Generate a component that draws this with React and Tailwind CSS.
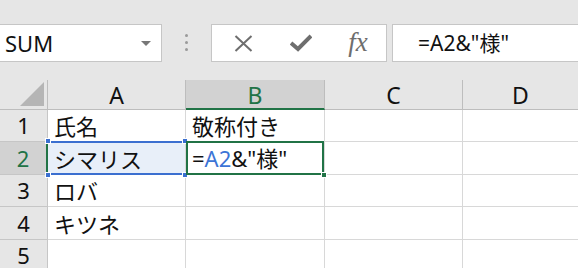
const rows = [
  { n: 1, a: '氏名', b: '敬称付き' },
  { n: 2, a: 'シマリス', b: null, active: true },
  { n: 3, a: 'ロバ', b: '' },
  { n: 4, a: 'キツネ', b: '' },
  { n: 5, a: '', b: '' },
];

const rowHeights = ['h-[32px]', 'h-[33px]', 'h-[32px]', 'h-[33px]', 'h-[32px]'];

function Handle({ className }) {
  return <span className={`absolute h-[6px] w-[6px] border border-white ${className}`} />;
}

export default function App() {
  return (
    <div className="h-[268px] w-[578px] overflow-hidden bg-white font-['Noto_Sans','Noto_Sans_CJK_JP',sans-serif] text-[#111]">
      {/* Formula bar */}
      <div className="flex h-[80px] items-start bg-[#e6e6e6] pt-[24px]">
        <div className="flex h-[38px] w-[162px] items-center justify-between border border-l-0 border-[#c6c6c6] bg-white pl-[5px] pr-[10px]">
          <span className="text-[22px] leading-none">SUM</span>
          <span className="h-0 w-0 border-x-[5px] border-t-[5px] border-x-transparent border-t-[#777]" />
        </div>
        <div className="flex w-[49px] flex-col items-center gap-[4px] pt-[10px]">
          <span className="h-[3px] w-[3px] rounded-full bg-[#9a9a9a]" />
          <span className="h-[3px] w-[3px] rounded-full bg-[#9a9a9a]" />
          <span className="h-[3px] w-[3px] rounded-full bg-[#9a9a9a]" />
        </div>
        <div className="flex h-[38px] w-[176px] items-center border border-[#c6c6c6] bg-white text-[#6e6e6e]">
          <div className="flex w-[60px] justify-center pl-[2px]">
            <svg width="19" height="17" viewBox="0 0 19 17">
              <path d="M1.5 1 L17.5 16 M17.5 1 L1.5 16" stroke="currentColor" strokeWidth="2" fill="none" />
            </svg>
          </div>
          <div className="flex w-[58px] justify-center">
            <svg width="22" height="18" viewBox="0 0 22 18">
              <path d="M1 9 L8 15 L21 2" stroke="currentColor" strokeWidth="4" fill="none" strokeLinejoin="miter" />
            </svg>
          </div>
          <div className="flex w-[56px] justify-center pb-[2px]">
            <span className="font-['Liberation_Serif',serif] text-[27px] italic leading-none">fx</span>
          </div>
        </div>
        <div className="ml-[5px] flex h-[38px] flex-1 items-center border border-r-0 border-[#c6c6c6] bg-white pl-[25px]">
          <span className="text-[21px] leading-none">=A2&amp;"様"</span>
        </div>
      </div>

      {/* Sheet */}
      <div className="grid grid-cols-[48px_138px_139px_138px_1fr]">
        {/* Column headers */}
        <div className="flex h-[30px] items-end justify-end border-r border-b border-[#bdbdbd] bg-[#e6e6e6] pb-[3px] pr-[3px]">
          <svg width="24" height="24" viewBox="0 0 24 24">
            <path d="M24 0 L24 24 L0 24 Z" fill="#b5b5b5" />
          </svg>
        </div>
        <div className="flex h-[30px] items-center justify-center border-r border-b border-[#bdbdbd] bg-[#e6e6e6] pt-[2px] text-[23px]">A</div>
        <div className="flex h-[30px] items-center justify-center border-r border-b-2 border-r-[#bdbdbd] border-b-[#217346] bg-[#d2d2d2] pt-[3px] text-[23px] text-[#217346]">B</div>
        <div className="flex h-[30px] items-center justify-center border-r border-b border-[#bdbdbd] bg-[#e6e6e6] pt-[2px] text-[23px]">C</div>
        <div className="flex h-[30px] items-center justify-center border-b border-[#bdbdbd] bg-[#e6e6e6] pt-[2px] text-[23px]">D</div>

        {rows.map((r, i) => (
          <Row key={r.n} r={r} h={rowHeights[i]} />
        ))}
      </div>
    </div>
  );
}

function Row({ r, h }) {
  const cell = `${h} border-r border-b border-[#d8d8d8] flex items-center pl-[6px] text-[22px]`;
  return (
    <>
      {r.active ? (
        <div className={`${h} flex items-center justify-center border-r-2 border-b border-r-[#217346] border-b-[#c6c6c6] bg-[#d2d2d2] text-[22px] text-[#217346]`}>
          {r.n}
        </div>
      ) : (
        <div className={`${h} flex items-center justify-center border-r border-b border-[#c6c6c6] bg-[#e6e6e6] text-[22px]`}>
          {r.n}
        </div>
      )}

      {r.active ? (
        <div className={`${cell} relative bg-[#e8eff9]`}>
          <span className="absolute inset-[-1px] border-y-2 border-[#3b6fd0]" />
          <Handle className="-left-[3px] -top-[4px] bg-[#3b6fd0]" />
          <Handle className="-right-[3px] -top-[4px] bg-[#3b6fd0]" />
          <Handle className="-left-[3px] -bottom-[4px] bg-[#3b6fd0]" />
          <Handle className="-right-[3px] -bottom-[4px] bg-[#3b6fd0]" />
          <span className="relative font-['Noto_Sans_CJK_JP',sans-serif]">{r.a}</span>
        </div>
      ) : (
        <div className={cell}>
          <span className="font-['Noto_Sans_CJK_JP',sans-serif]">{r.a}</span>
        </div>
      )}

      {r.active ? (
        <div className={`${cell} relative`}>
          <span className="absolute inset-x-[0px] -top-[1px] -bottom-[1px] border-2 border-[#217346]" />
          <Handle className="-right-[3px] -bottom-[4px] bg-[#217346]" />
          <span className="relative">
            =<span className="text-[#3c74d6]">A2</span>&amp;"様"
          </span>
        </div>
      ) : (
        <div className={cell}>
          <span className="font-['Noto_Sans_CJK_JP',sans-serif]">{r.b}</span>
        </div>
      )}

      <div className={cell} />
      <div className={`${h} border-b border-[#d8d8d8]`} />
    </>
  );
}
